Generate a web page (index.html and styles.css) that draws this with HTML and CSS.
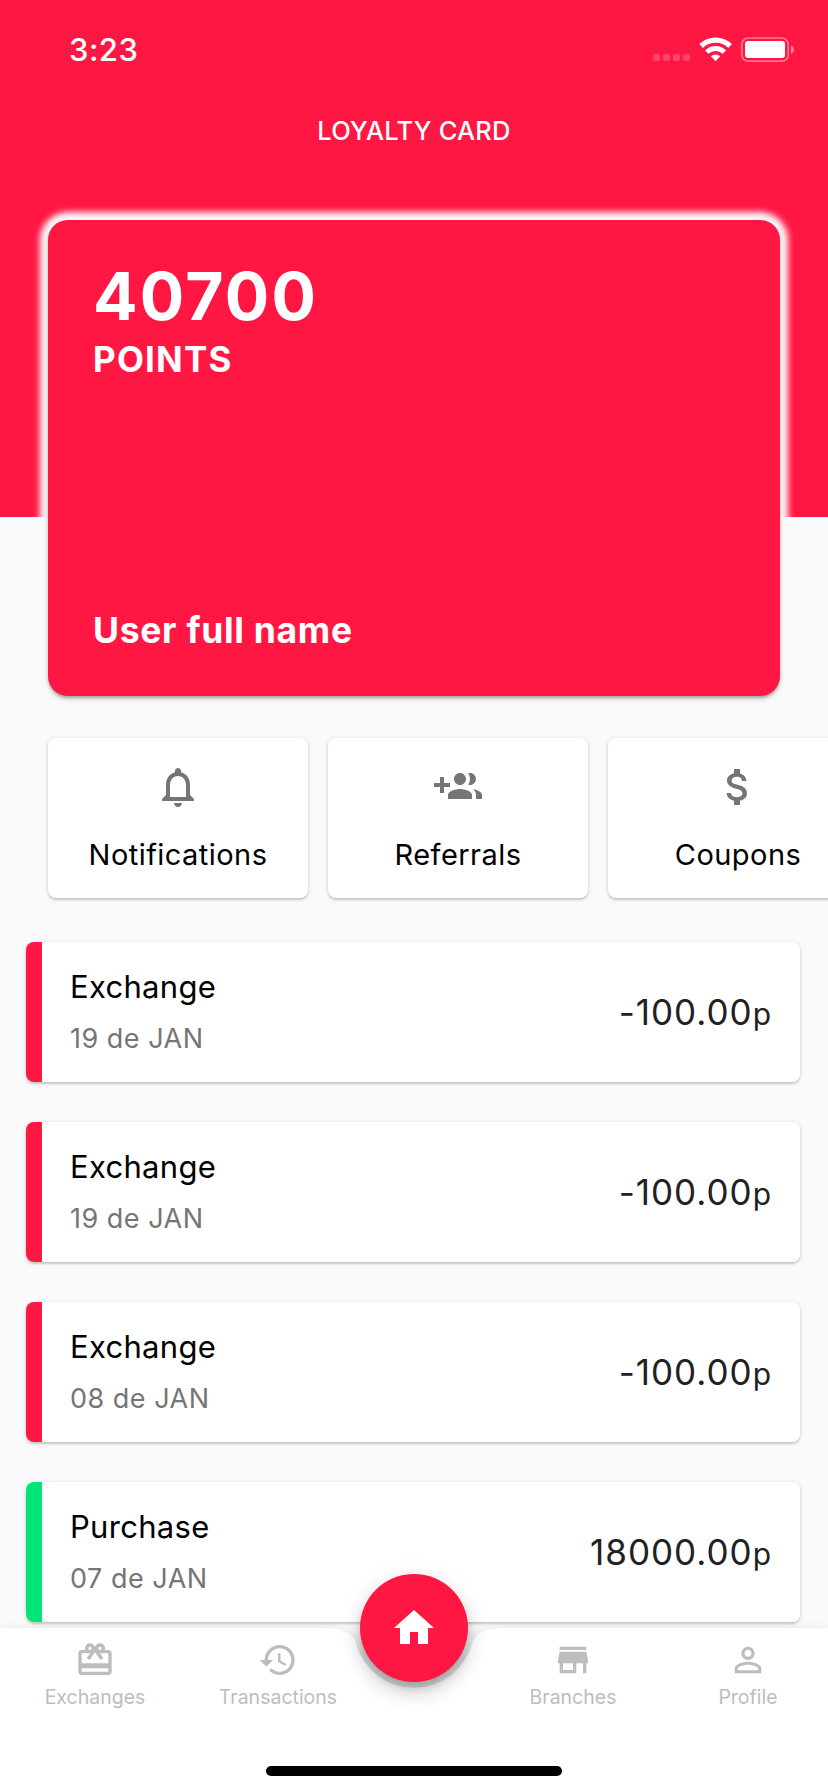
FILE: index.html
```html
<!DOCTYPE html>
<html lang="en">
<head>
<meta charset="utf-8">
<title>Loyalty card</title>
<link rel="stylesheet" href="styles.css">
</head>
<body>
<div class="app">
  <main class="content">
    <div class="hero">
      <div class="status">
        <span class="time">3:23</span>
        <svg class="status-icons" width="144" height="26" viewBox="0 0 144 26">
          <g fill="#fff" fill-opacity=".2">
            <rect x="3" y="17" width="7" height="7" rx="2"/><rect x="13" y="17" width="7" height="7" rx="2"/>
            <rect x="23" y="17" width="7" height="7" rx="2"/><rect x="33" y="17" width="7" height="7" rx="2"/>
          </g>
          <g fill="none" stroke="#fff">
            <path d="M51.100 9A21 21 0 0 1 80.100 9" stroke-width="5.200"/>
            <path d="M56.800 15.100A12.600 12.600 0 0 1 74.400 15.100" stroke-width="4.800"/>
          </g>
          <path d="M60.900 19.200A7 7 0 0 1 70.300 19.200L65.600 24.200Z" fill="#fff"/>
          <rect x="91.800" y="1" width="46.400" height="23.200" rx="6.500" fill="none" stroke="#fff" stroke-opacity=".42" stroke-width="1.700"/>
          <rect x="95" y="4" width="40" height="17" rx="3" fill="#fff"/>
          <path d="M141 8.400c4 1.600 4 6.800 0 8.400Z" fill="#fff" fill-opacity=".5"/>
        </svg>
      </div>
      <h1 class="title">LOYALTY CARD</h1>
    </div>
    <section class="loyalty-card">
      <div>
        <div class="points">40700</div>
        <div class="points-label">POINTS</div>
      </div>
      <div class="owner">User full name</div>
    </section>
    <section class="shortcuts">
      <div class="tile">
        <svg class="tile-icon" viewBox="0 0 24 24"><path d="M12 22c1.1 0 2-.9 2-2h-4c0 1.1.9 2 2 2zm6-6v-5c0-3.070-1.630-5.640-4.500-6.320V4c0-.83-.67-1.500-1.500-1.500s-1.500.67-1.500 1.500v.68C7.640 5.360 6 7.920 6 11v5l-2 2v1h16v-1l-2-2zm-2 1H8v-6c0-2.480 1.510-4.500 4-4.500s4 2.020 4 4.500v6z"/></svg>
        <span class="tile-label">Notifications</span>
      </div>
      <div class="tile">
        <svg class="tile-icon" viewBox="0 0 24 24"><path d="M8 10H5V7H3v3H0v2h3v3h2v-3h3v-2zm10 1c1.660 0 2.990-1.340 2.990-3S19.660 5 18 5c-.32 0-.63.05-.91.14.57.81.9 1.790.9 2.860s-.34 2.040-.9 2.860c.28.09.59.14.91.14zm-5 0c1.660 0 2.990-1.340 2.990-3S14.660 5 13 5c-1.660 0-3 1.340-3 3s1.340 3 3 3zm6.620 2.160c.83.73 1.380 1.660 1.380 2.840v2h3v-2c0-1.540-2.370-2.490-4.380-2.840zM13 13c-2 0-6 1-6 3v2h12v-2c0-2-4-3-6-3z"/></svg>
        <span class="tile-label">Referrals</span>
      </div>
      <div class="tile">
        <svg class="tile-icon" viewBox="0 0 24 24"><path d="M11.800 10.900c-2.270-.59-3-1.200-3-2.150 0-1.090 1.010-1.850 2.700-1.850 1.780 0 2.440.85 2.500 2.100h2.210c-.07-1.720-1.120-3.300-3.210-3.810V3h-3v2.160c-1.940.42-3.500 1.680-3.500 3.610 0 2.310 1.910 3.460 4.700 4.130 2.500.6 3 1.480 3 2.410 0 .69-.49 1.790-2.700 1.790-2.060 0-2.870-.92-2.980-2.100h-2.200c.12 2.190 1.760 3.420 3.680 3.830V21h3v-2.150c1.950-.37 3.500-1.500 3.500-3.550 0-2.840-2.430-3.810-4.700-4.400z"/></svg>
        <span class="tile-label">Coupons</span>
      </div>
    </section>
    <section class="list">
      <article class="entry debit">
        <div><div class="kind">Exchange</div><div class="date">19 de JAN</div></div>
        <div class="amount">-100.00<span class="unit">p</span></div>
      </article>
      <article class="entry debit">
        <div><div class="kind">Exchange</div><div class="date">19 de JAN</div></div>
        <div class="amount">-100.00<span class="unit">p</span></div>
      </article>
      <article class="entry debit">
        <div><div class="kind">Exchange</div><div class="date">08 de JAN</div></div>
        <div class="amount">-100.00<span class="unit">p</span></div>
      </article>
      <article class="entry credit">
        <div><div class="kind">Purchase</div><div class="date">07 de JAN</div></div>
        <div class="amount">18000.00<span class="unit">p</span></div>
      </article>
    </section>
  </main>

  <nav class="bottom-bar">
    <svg class="bar-shape" width="828" height="164" viewBox="0 0 828 164">
      <defs>
        <linearGradient id="notch" x1="0" y1="0" x2="0" y2="1">
          <stop offset="0" stop-color="#000" stop-opacity="0"/>
          <stop offset=".5" stop-color="#000" stop-opacity=".09"/>
          <stop offset="1" stop-color="#000" stop-opacity=".06"/>
        </linearGradient>
      </defs>
      <path fill="url(#notch)" d="M340 2Q352 2 355.940 15.130A60 60 0 0 0 472.060 15.130Q476 2 488 2Z"/>
      <path class="bar-fill" d="M0 0H322Q352 0 355.940 15.130A60 60 0 0 0 472.060 15.130Q476 0 506 0H828V164H0Z"/>
    </svg>
    <div class="tabs">
      <a class="tab exchanges">
        <svg viewBox="0 0 24 24"><path d="M20 6h-2.180c.11-.31.18-.65.18-1 0-1.660-1.340-3-3-3-1.050 0-1.960.54-2.500 1.350l-.5.67-.5-.68C10.960 2.540 10.050 2 9 2 7.340 2 6 3.340 6 5c0 .35.07.69.18 1H4c-1.110 0-1.990.89-1.990 2L2 19c0 1.110.89 2 2 2h16c1.110 0 2-.89 2-2V8c0-1.110-.89-2-2-2zm-5-2c.55 0 1 .45 1 1s-.45 1-1 1-1-.45-1-1 .45-1 1-1zM9 4c.55 0 1 .45 1 1s-.45 1-1 1-1-.45-1-1 .45-1 1-1zm11 15H4v-2h16v2zm0-5H4V8h5.080L7 10.830 8.620 12 11 8.760l1-1.360 1 1.360L15.380 12 17 10.830 14.920 8H20v6z"/></svg>
        <span>Exchanges</span>
      </a>
      <a class="tab transactions">
        <svg viewBox="0 0 24 24"><path d="M13 3c-4.970 0-9 4.030-9 9H1l3.890 3.890.07.14L9 12H6c0-3.870 3.130-7 7-7s7 3.130 7 7-3.130 7-7 7c-1.930 0-3.680-.79-4.940-2.060l-1.420 1.420C8.270 19.990 10.510 21 13 21c4.970 0 9-4.030 9-9s-4.030-9-9-9zm-1 5v5l4.280 2.540.72-1.210-3.500-2.080V8H12z"/></svg>
        <span>Transactions</span>
      </a>
      <a class="tab branches">
        <svg viewBox="0 0 24 24"><path d="M20 4H4v2h16V4zm1 10v-2l-1-5H4l-1 5v2h1v6h10v-6h4v6h2v-6h1zm-9 4H6v-4h6v4z"/></svg>
        <span>Branches</span>
      </a>
      <a class="tab profile">
        <svg viewBox="0 0 24 24"><path d="M12 5.900c1.160 0 2.100.94 2.100 2.100s-.94 2.100-2.100 2.100S9.900 9.160 9.900 8s.94-2.100 2.100-2.100m0 9c2.970 0 6.100 1.460 6.100 2.100v1.100H5.900V17c0-.64 3.130-2.100 6.100-2.100M12 4C9.790 4 8 5.790 8 8s1.790 4 4 4 4-1.790 4-4-1.790-4-4-4zm0 9c-2.670 0-8 1.340-8 4v3h16v-3c0-2.660-5.330-4-8-4z"/></svg>
        <span>Profile</span>
      </a>
    </div>
    <div class="home-indicator"></div>
    <div class="fab"><svg width="48" height="48" viewBox="0 0 24 24"><path fill="#fff" d="M10 20v-6h4v6h5v-8h3L12 3 2 12h3v8z"/></svg></div>
  </nav>
</div>
</body>
</html>
```
FILE: styles.css
```css
* { box-sizing: border-box; }

body {
  margin: 0;
  background: #fafafa;
  font-family: Inter, "Liberation Sans", sans-serif;
  color: #000;
}

.app {
  position: relative;
  width: 828px;
  height: 1792px;
  overflow: hidden;
}

.hero {
  height: 517px;
  background: #ff1744;
  color: #fff;
}

.status {
  display: flex;
  justify-content: space-between;
  align-items: flex-start;
  height: 88px;
  padding: 37px 34px 0 69px;
}

.time {
  margin-top: -6px;
  font-size: 31px;
  line-height: 38px;
  font-weight: 500;
  letter-spacing: 0.5px;
}

.title {
  margin: 26px 0 0;
  font-size: 25.500px;
  line-height: 34px;
  font-weight: 500;
  text-align: center;
  letter-spacing: 0.2px;
}

.loyalty-card {
  display: flex;
  flex-direction: column;
  justify-content: space-between;
  position: relative;
  height: 475.500px;
  margin: -297px 48px 0;
  padding: 37px 45px 41px;
  border-radius: 20px;
  background: #ff1744;
  color: #fff;
  font-weight: 700;
  box-shadow: 0 2px 2px rgba(0, 0, 0, .16), 0 3px 5px rgba(0, 0, 0, .2), 0 0 6px 8px #fafafa;
}

.points {
  font-size: 66px;
  line-height: 78px;
  letter-spacing: 2.200px;
}

.points-label {
  margin-top: 2px;
  font-size: 35px;
  line-height: 44px;
  letter-spacing: 1.200px;
}

.owner {
  font-size: 35.500px;
  line-height: 48px;
  letter-spacing: 0.700px;
}

.shortcuts {
  display: flex;
  gap: 20px;
  margin-top: 42.500px;
  padding-left: 48px;
}

.tile {
  display: flex;
  flex: 0 0 260px;
  flex-direction: column;
  align-items: center;
  height: 160px;
  padding-top: 25px;
  border-radius: 8px;
  background: #fff;
  box-shadow: 0 2px 2px rgba(0, 0, 0, .13), 0 1px 5px rgba(0, 0, 0, .14);
}

.tile-icon {
  width: 48px;
  height: 48px;
  fill: #757575;
}

.tile-label {
  margin-top: 26px;
  font-size: 29px;
  line-height: 36px;
  letter-spacing: 0.450px;
}

.list {
  display: flex;
  flex-direction: column;
  gap: 40px;
  margin-top: 44px;
  padding: 0 28px 0 26px;
}

.entry {
  display: flex;
  justify-content: space-between;
  height: 140px;
  padding: 0 28px 0 44px;
  border-radius: 8px;
  box-shadow: 0 2px 2px rgba(0, 0, 0, .13), 0 1px 5px rgba(0, 0, 0, .14);
}

.debit { background: linear-gradient(90deg, #ff1744 16px, #fff 16px); }
.credit { background: linear-gradient(90deg, #00e676 16px, #fff 16px); }

.kind {
  margin-top: 26px;
  font-size: 31px;
  line-height: 38px;
  letter-spacing: 0.300px;
}

.date {
  margin-top: 15px;
  font-size: 27px;
  line-height: 36px;
  letter-spacing: 0.500px;
  color: #757575;
}

.amount {
  margin-top: 48px;
  font-size: 35px;
  line-height: 44px;
  letter-spacing: 1px;
  color: #212121;
}

.unit { font-size: 30px; }

.bottom-bar {
  position: absolute;
  left: 0;
  bottom: 0;
  width: 828px;
  height: 164px;
}

.bar-shape {
  position: absolute;
  left: 0;
  top: 0;
  overflow: visible;
}

.bar-fill {
  fill: #fff;
  filter: drop-shadow(0 0 4px rgba(0, 0, 0, .07));
}

.tabs {
  position: relative;
  display: grid;
  grid-template-columns: 190px 176px 96px 222px 128px;
  height: 140px;
}

.tab {
  display: flex;
  flex-direction: column;
  align-items: center;
  padding-top: 12px;
  color: #bdbdbd;
  font-size: 19.500px;
  line-height: 24px;
}

.branches { grid-column: 4; }

.tab svg {
  width: 40px;
  height: 40px;
  margin-bottom: 5px;
  fill: currentColor;
}

.home-indicator {
  position: relative;
  width: 296px;
  height: 10px;
  margin: -2px auto 0;
  border-radius: 5px;
  background: #000;
}

.fab {
  position: absolute;
  left: 360px;
  top: -54px;
  display: flex;
  align-items: center;
  justify-content: center;
  width: 108px;
  height: 108px;
  border-radius: 50%;
  background: #ff1744;
  box-shadow: 0 6px 10px -2px rgba(0, 0, 0, .2), 0 12px 20px rgba(0, 0, 0, .14), 0 2px 24px rgba(0, 0, 0, .08);
}
```
